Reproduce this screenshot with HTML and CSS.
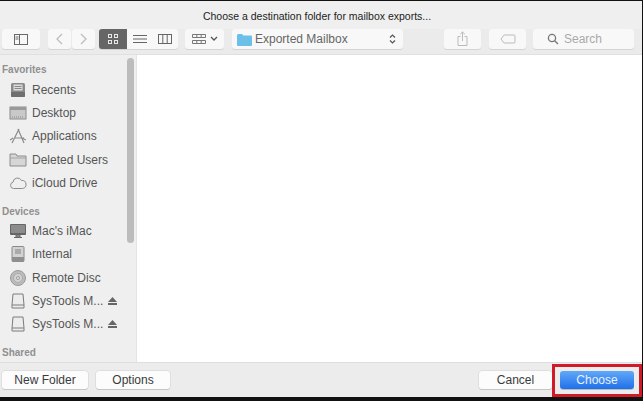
FILE: index.html
```html
<!DOCTYPE html>
<html lang="en">
<head>
<meta charset="utf-8">
<title>Choose a destination folder</title>
<link rel="stylesheet" href="styles.css">
</head>
<body>
<div class="window">
  <header class="titlebar">Choose a destination folder for mailbox exports...</header>
  <div class="toolbar">
    <button class="tb w38"><svg width="16" height="13" viewBox="0 0 16 13"><rect x="1.5" y="1.5" width="13" height="10" fill="none" stroke="#6a6a6a"/><path d="M6.5 1.5v10M2.5 4h3M2.5 6h3" stroke="#6a6a6a" fill="none"/></svg></button>
    <div class="seg nav">
      <button class="tb w23"><svg width="9" height="14" viewBox="0 0 9 14"><path d="M7 2L2 7l5 5" fill="none" stroke="#bdbdbd" stroke-width="1.3"/></svg></button>
      <button class="tb w23"><svg width="9" height="14" viewBox="0 0 9 14"><path d="M2 2l5 5-5 5" fill="none" stroke="#bdbdbd" stroke-width="1.3"/></svg></button>
    </div>
    <div class="seg views">
      <button class="tb w28 active"><svg width="12" height="12" viewBox="0 0 12 12" fill="none" stroke="#e8e8e8"><rect x="1.5" y="1.5" width="3" height="3"/><rect x="7.5" y="1.5" width="3" height="3"/><rect x="1.5" y="7.5" width="3" height="3"/><rect x="7.5" y="7.5" width="3" height="3"/></svg></button>
      <button class="tb w25"><svg width="14" height="10" viewBox="0 0 14 10"><path d="M0 1.5h14M0 5h14M0 8.5h14" stroke="#666"/></svg></button>
      <button class="tb w26"><svg width="16" height="12" viewBox="0 0 16 12" fill="none" stroke="#666"><rect x="1.5" y="1.5" width="13" height="9"/><path d="M5.8 1.5v9M10.2 1.5v9"/></svg></button>
    </div>
    <button class="tb w39 arrange"><svg width="16" height="12" viewBox="0 0 16 12" fill="none" stroke="#777"><path d="M1.500 1.500h13v3h-13zM1.500 7.500h13v3h-13zM5.800 1.500v3M10.200 1.500v3M5.800 7.500v3M10.200 7.500v3"/></svg><svg width="8" height="6" viewBox="0 0 8 6"><path d="M1 1l3 3 3-3" fill="none" stroke="#555" stroke-width="1.3"/></svg></button>
    <div class="tb path">
      <svg width="15" height="13" viewBox="0 0 15 13"><path d="M0 2.5Q0 1 1.2 1H5l1.3 1.5H14q1 0 1 1V12q0 1-1 1H1q-1 0-1-1z" fill="#6cbfe9"/></svg>
      <span class="path-name">Exported Mailbox</span>
      <svg class="updown" width="7" height="12" viewBox="0 0 7 12"><path d="M1 4.5L3.5 2 6 4.5M1 7.5L3.5 10 6 7.5" fill="none" stroke="#555" stroke-width="1.2"/></svg>
    </div>
    <button class="tb w37 share"><svg width="11" height="16" viewBox="0 0 11 16" fill="none" stroke="#bbb"><path d="M3.5 5.5H1v9h9v-9H7.5M5.5 10V1M3.2 3.2L5.5 1l2.3 2.2"/></svg></button>
    <button class="tb w37 tag"><svg width="16" height="10" viewBox="0 0 16 10"><path d="M4 1h10q1 0 1 1v6q0 1-1 1H4L1 5z" fill="none" stroke="#bbb"/></svg></button>
    <div class="tb search"><svg width="12" height="12" viewBox="0 0 12 12" fill="none" stroke="#777" stroke-width="1.3"><circle cx="5" cy="5" r="3.6"/><path d="M7.7 7.7L11 11"/></svg><span>Search</span></div>
  </div>
  <main class="content">
    <aside class="sidebar">
      <nav class="list">
        <div class="heading fav">Favorites</div>
        <div class="row"><svg class="ico" viewBox="0 0 18 18"><rect x="2" y="2" width="14" height="14" rx="1.5" fill="#8a8a8a"/><rect x="4.5" y="3.5" width="9" height="6" fill="#ddd"/><path d="M5.5 5.5h7M5.5 7.5h7" stroke="#888"/><rect x="2" y="11" width="14" height="5" rx="1" fill="#6f6f6f"/></svg><span>Recents</span></div>
        <div class="row"><svg class="ico" viewBox="0 0 18 18"><rect x="1" y="3" width="16" height="12" fill="#c9c9c9" stroke="#8c8c8c"/><rect x="1" y="3" width="16" height="3" fill="#9a9a9a"/><path d="M3 13h12" stroke="#888" stroke-dasharray="1 1"/></svg><span>Desktop</span></div>
        <div class="row"><svg class="ico" viewBox="0 0 18 18" fill="none" stroke="#8c8c8c" stroke-width="1.2"><path d="M3 16L10 2M9 2l6 14M5 11h10M1 13l3-2M13 11l4 2"/></svg><span>Applications</span></div>
        <div class="row"><svg class="ico" viewBox="0 0 18 18"><path d="M1 3h6l1 2h9v10H1z" fill="#d6d6d6" stroke="#8c8c8c"/><path d="M1 7h16" stroke="#a5a5a5"/></svg><span>Deleted Users</span></div>
        <div class="row"><svg class="ico" viewBox="0 0 18 18"><path d="M4.5 14.5a3.2 3.2 0 0 1-.5-6.3A4.5 4.5 0 0 1 12.500 6.500a3.700 3.700 0 0 1 1 8z" fill="none" stroke="#8c8c8c"/></svg><span>iCloud Drive</span></div>
        <div class="heading dev">Devices</div>
        <div class="row"><svg class="ico" viewBox="0 0 18 18"><rect x="1" y="2" width="16" height="11" rx="1" fill="#666"/><rect x="2" y="3" width="14" height="8" fill="#8c8c8c"/><path d="M7 13h4v2H7zM5 15.500h8" stroke="#666" fill="#aaa"/></svg><span>Mac's iMac</span></div>
        <div class="row"><svg class="ico" viewBox="0 0 18 18"><rect x="3" y="1.500" width="12" height="15" rx="1" fill="#d2d2d2" stroke="#8a8a8a"/><rect x="6" y="4" width="6" height="5" fill="#aaa"/><rect x="3" y="12" width="12" height="4.500" fill="#8f8f8f"/></svg><span>Internal</span></div>
        <div class="row"><svg class="ico" viewBox="0 0 18 18"><circle cx="9" cy="9" r="7.500" fill="#bcbcbc" stroke="#999"/><circle cx="9" cy="9" r="4.500" fill="#d2d2d2" stroke="#aaa"/><circle cx="9" cy="9" r="1.500" fill="#eee" stroke="#999"/></svg><span>Remote Disc</span></div>
        <div class="row"><svg class="ico" viewBox="0 0 18 18"><path d="M4 2h10l1 11v3H3v-3z" fill="#ececec" stroke="#7c7c7c"/><path d="M3 13h12" stroke="#7c7c7c"/></svg><span class="grow">SysTools M...</span><svg class="eject" width="9" height="8" viewBox="0 0 9 8"><path d="M4.500 0L9 5H0zM0 6h9v2H0z" fill="#666"/></svg></div>
        <div class="row"><svg class="ico" viewBox="0 0 18 18"><path d="M4 2h10l1 11v3H3v-3z" fill="#ececec" stroke="#7c7c7c"/><path d="M3 13h12" stroke="#7c7c7c"/></svg><span class="grow">SysTools M...</span><svg class="eject" width="9" height="8" viewBox="0 0 9 8"><path d="M4.500 0L9 5H0zM0 6h9v2H0z" fill="#666"/></svg></div>
        <div class="heading shared">Shared</div>
      </nav>
      <div class="scrollbar"></div>
    </aside>
    <section class="files"></section>
  </main>
  <footer class="bottombar">
    <button class="btn w86">New Folder</button>
    <button class="btn w74">Options</button>
    <div class="spacer"></div>
    <button class="btn w73">Cancel</button>
    <button class="btn primary">Choose</button>
    <div class="highlight"></div>
  </footer>
</div>
</body>
</html>
```
FILE: styles.css
```css
* { box-sizing: border-box; }
html, body { margin: 0; padding: 0; }
body { width: 643px; height: 401px; overflow: hidden; background: #111; font-family: "Liberation Sans", Arial, sans-serif; }
.window { position: relative; width: 642px; height: 396px; margin-top: 1px; background: #efefef; display: flex; flex-direction: column; overflow: hidden; }
button { font-family: inherit; margin: 0; padding: 0; border: 0; }
.titlebar { height: 28px; padding: 8px 8px 0 0; text-align: center; font-size: 10.5px; line-height: 14px; color: #222; }
.toolbar { height: 26px; padding-left: 2px; display: flex; align-items: flex-start; background: #ebebeb; border-bottom: 1px solid #e0e0e0; }
.tb { height: 20px; background: #f8f8f8; border-radius: 3px; display: flex; align-items: center; justify-content: center; box-shadow: 0 1px 0 #d4d4d4; flex: none; }
.seg { display: flex; flex: none; }
.nav { margin-left: 8px; gap: 1px; }
.views { margin-left: 4px; }
.views .tb { border-radius: 0; }
.views .tb:first-child { border-radius: 3px 0 0 3px; }
.views .tb:last-child { border-radius: 0 3px 3px 0; }
.w38 { width: 38px; } .w23 { width: 23px; } .w28 { width: 28px; } .w25 { width: 25px; } .w26 { width: 26px; } .w39 { width: 39px; } .w37 { width: 37px; }
.tb.active { background: #666; }
.arrange { margin-left: 7px; gap: 3px; }
.path { width: 171px; margin-left: 8px; padding: 0 7px 0 5px; justify-content: flex-start; gap: 3px; font-size: 12px; color: #666; }
.path-name { flex: 1; white-space: nowrap; }
.share { margin-left: 41px; }
.tag { margin-left: 8px; }
.search { width: 101px; margin-left: 7px; gap: 5px; justify-content: flex-start; padding-left: 14px; font-size: 12px; color: #aaa; }
.content { flex: 1; display: flex; min-height: 0; }
.sidebar { width: 137px; flex: none; display: flex; background: #efefef; border-right: 1px solid #e4e4e4; }
.list { flex: 1; min-width: 0; padding: 8px 0 0 2px; }
.heading { font-size: 10px; font-weight: 700; line-height: 14px; color: #8f8f8f; }
.fav { height: 15px; }
.dev { margin-top: 11px; height: 14px; line-height: 13px; }
.shared { margin-top: 10px; }
.row { height: 23.3px; padding-left: 7px; display: flex; align-items: center; gap: 4px; font-size: 12px; color: #555; white-space: nowrap; }
.ico { width: 18px; height: 18px; flex: none; margin-right: 1px; }
.grow { width: 68px; flex: none; }
.eject { margin-left: 4px; flex: none; }
.scrollbar { width: 7px; height: 185px; margin: 3px 2px 0 0; background: #bcbcbc; border-radius: 4px; flex: none; }
.files { flex: 1; background: #fff; }
.bottombar { position: relative; height: 35px; flex: none; padding: 8px 8px 0 2px; display: flex; align-items: flex-start; background: #ececec; border-top: 1px solid #dedede; }
.btn { height: 18px; background: #fcfcfc; border-radius: 3px; box-shadow: 0 0 0 .5px #d0d0d0, 0 1px 0 #bdbdbd; font-size: 12px; line-height: 18px; color: #3a3a3a; text-align: center; flex: none; }
.w86 { width: 86px; } .w74 { width: 74px; margin-left: 8px; } .w73 { width: 73px; }
.spacer { flex: 1; }
.btn.primary { width: 74px; margin-left: 8px; color: #e8f1fd; background: linear-gradient(#62a8f8, #1f70ea); box-shadow: 0 1px 0 #bbb; }
.highlight { position: absolute; left: 552px; top: 1px; width: 90px; height: 33px; border: 3px solid #d01a28; pointer-events: none; }
```
